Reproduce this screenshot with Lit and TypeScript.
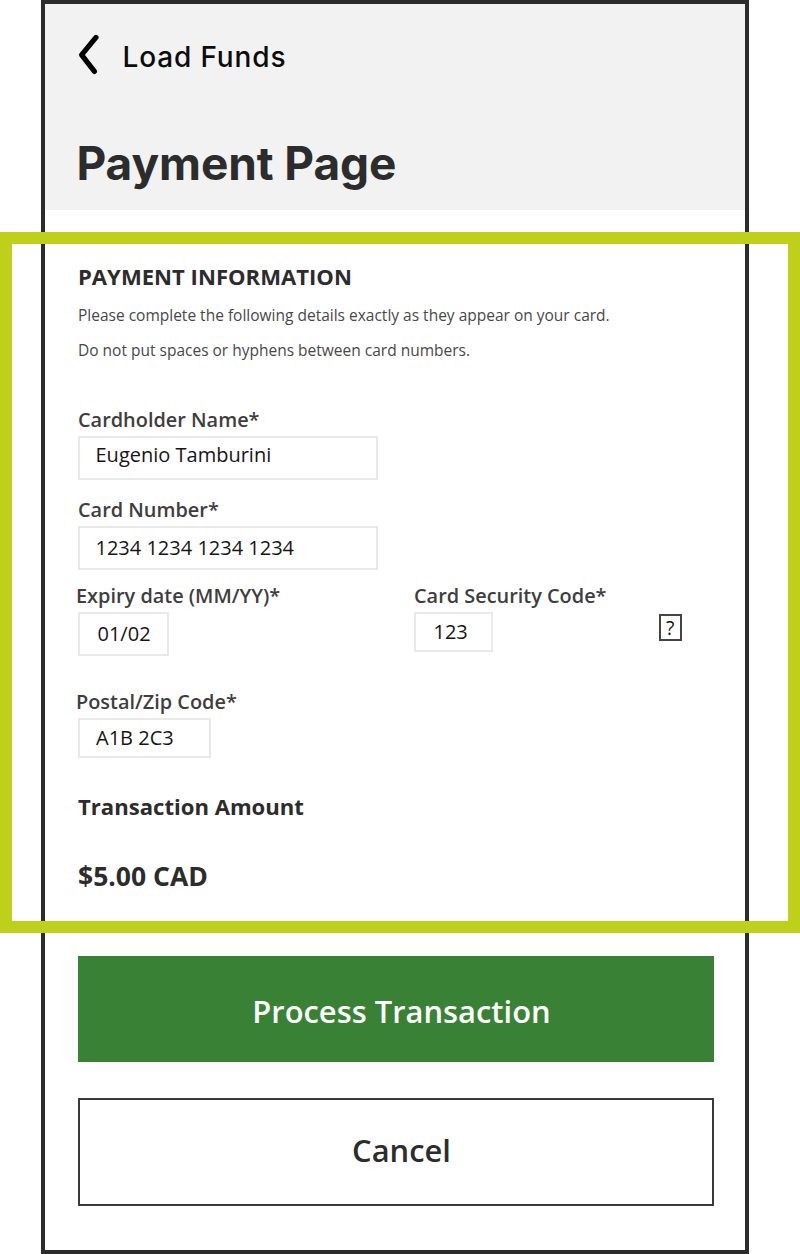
import { LitElement, html, css } from "lit";
import { customElement, property } from "lit/decorators.js";

@customElement("form-field")
class FormField extends LitElement {
  @property() label = "";
  @property() value = "";

  static styles = css`
    :host {
      display: block;
    }
    .label {
      display: block;
      margin-left: var(--label-shift, 0px);
      font-size: 19.9px;
      font-weight: 600;
      line-height: 28px;
      color: #3e3e3e;
      white-space: nowrap;
    }
    .box {
      box-sizing: border-box;
      width: var(--box-width, 300px);
      height: var(--box-height, 44px);
      margin-top: var(--box-gap, 2px);
      padding: var(--text-top, 3px) 0 0 var(--text-left, 15px);
      border: 2px solid #e9e9e9;
      font-size: 20px;
      line-height: 28px;
      color: #151515;
      white-space: nowrap;
    }
  `;

  render() {
    return html`
      <span class="label">${this.label}</span>
      <div class="box">${this.value}</div>
    `;
  }
}

@customElement("app-root")
class AppRoot extends LitElement {
  static styles = css`
    :host {
      display: block;
      position: relative;
      height: 1254px;
      overflow: hidden;
      background: #fff;
      font-family: "Open Sans", "Noto Sans", sans-serif;
      color: #2c2c2d;
    }
    .phone {
      box-sizing: border-box;
      width: 708px;
      height: 1254px;
      margin-left: 41px;
      border: 4px solid #2c2c2d;
    }
    header {
      box-sizing: border-box;
      height: 206px;
      padding: 29px 0 0 31px;
      background: #f2f2f2;
      font-family: Inter, Lato, sans-serif;
    }
    .back {
      display: flex;
      align-items: flex-start;
      height: 46px;
    }
    .back svg {
      display: block;
      width: 28px;
      height: 46px;
    }
    .back span {
      margin: 7px 0 0 18.5px;
      font-size: 28px;
      font-weight: 540;
      line-height: 34px;
      letter-spacing: 0.85px;
      color: #0c0c0c;
    }
    h1 {
      margin: 56px 0 0 0.5px;
      font-size: 46px;
      font-weight: 700;
      line-height: 56px;
      letter-spacing: -0.1px;
    }
    main {
      padding: 51px 31px 0 33px;
    }
    h2 {
      margin: 0;
      font-size: 22.1px;
      font-weight: 700;
      line-height: 30px;
    }
    .hint {
      margin: 0;
      font-size: 15.5px;
      font-weight: 400;
      line-height: 24px;
      color: #484848;
    }
    .hint.first {
      margin-top: 12px;
    }
    .hint.second {
      margin-top: 11px;
    }
    .name {
      margin-top: 44px;
      --text-left: 15.5px;
      --text-top: 3px;
    }
    .number {
      margin-top: 16px;
      --text-left: 15.5px;
      --text-top: 6px;
    }
    .row {
      display: flex;
      align-items: flex-start;
      margin-top: 12px;
    }
    .expiry {
      width: 336px;
      --label-shift: -2px;
      --box-width: 91px;
      --text-left: 17.5px;
      --text-top: 6px;
    }
    .security {
      width: 244.6px;
      --box-width: 79px;
      --box-height: 40px;
      --text-left: 17.5px;
      --text-top: 4px;
    }
    .help {
      box-sizing: border-box;
      width: 23px;
      height: 27px;
      margin: 32px 0 0;
      padding: 0;
      border: 2px solid #444;
      background: none;
      font: 400 19.5px/21px "Open Sans", sans-serif;
      text-align: center;
      color: #111;
    }
    .postal {
      margin-top: 32px;
      --label-shift: -2px;
      --box-width: 133px;
      --box-height: 40px;
      --text-left: 16px;
      --text-top: 4px;
    }
    .amount-title {
      margin-top: 33px;
    }
    .amount {
      margin: 37px 0 0;
      font-size: 26.5px;
      font-weight: 700;
      line-height: 36px;
    }
    .action {
      box-sizing: border-box;
      display: block;
      width: 636px;
      padding: 0 0 0 11px;
      font: 600 30.9px/44px "Open Sans", sans-serif;
      text-align: center;
    }
    .process {
      height: 106px;
      margin-top: 62px;
      padding-top: 4px;
      border: 0;
      background: #398235;
      color: #fff;
    }
    .cancel {
      height: 108px;
      margin-top: 36px;
      padding-bottom: 4px;
      border: 2px solid #3a3a3b;
      background: #fff;
      color: #2c2c2d;
    }
    .highlight {
      position: absolute;
      box-sizing: border-box;
      top: 232px;
      left: 0;
      width: 800px;
      height: 701px;
      border: 12px solid #bfd01a;
      pointer-events: none;
    }
  `;

  render() {
    return html`
      <div class="phone">
        <header>
          <div class="back">
            <svg viewBox="0 0 28 46" fill="none" stroke="#000" stroke-width="5.2" stroke-linecap="round" stroke-linejoin="round">
              <path d="M20 4.4 L5.6 21.8 L18.4 38.4" />
            </svg>
            <span>Load Funds</span>
          </div>
          <h1>Payment Page</h1>
        </header>
        <main>
          <h2>PAYMENT INFORMATION</h2>
          <p class="hint first">Please complete the following details exactly as they appear on your card.</p>
          <p class="hint second">Do not put spaces or hyphens between card numbers.</p>
          <form-field class="name" label="Cardholder Name*" value="Eugenio Tamburini"></form-field>
          <form-field class="number" label="Card Number*" value="1234 1234 1234 1234"></form-field>
          <div class="row">
            <form-field class="expiry" label="Expiry date (MM/YY)*" value="01/02"></form-field>
            <form-field class="security" label="Card Security Code*" value="123"></form-field>
            <button class="help">?</button>
          </div>
          <form-field class="postal" label="Postal/Zip Code*" value="A1B 2C3"></form-field>
          <h2 class="amount-title">Transaction Amount</h2>
          <p class="amount">$5.00 CAD</p>
          <button class="action process">Process Transaction</button>
          <button class="action cancel">Cancel</button>
        </main>
      </div>
      <div class="highlight"></div>
    `;
  }
}
